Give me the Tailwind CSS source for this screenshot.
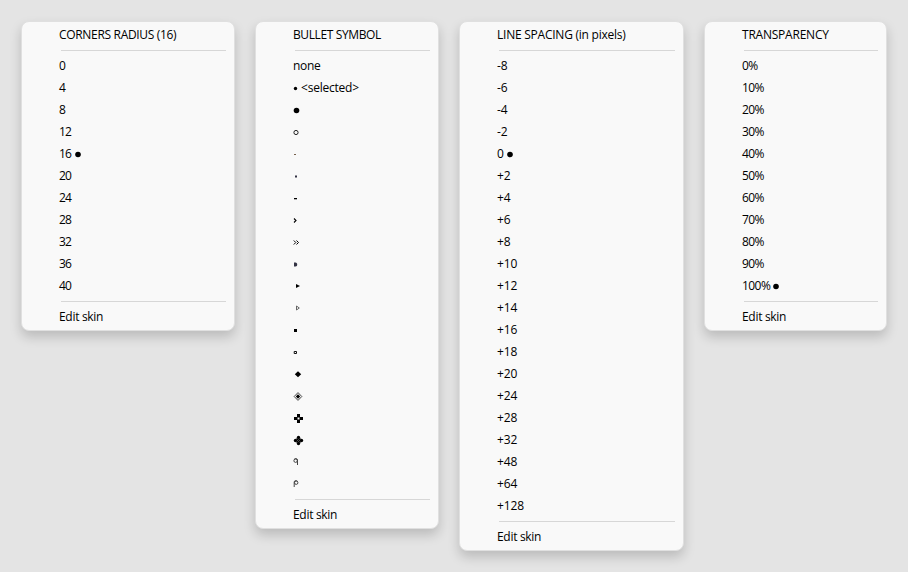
<!DOCTYPE html>
<html lang="en">
<head>
<meta charset="utf-8">
<title>Skin menus</title>
<script src="https://cdn.jsdelivr.net/npm/@tailwindcss/browser@4"></script>
</head>
<body class="bg-[#e4e4e4] w-[908px] h-[572px] overflow-hidden font-['Open_Sans','Noto_Sans',sans-serif] text-[12px] leading-[22px] text-black whitespace-nowrap">
<main class="flex items-start pl-[21px] pt-[21px] gap-5">

<section class="w-[214px] rounded-lg border border-[#e0e0e0] bg-[#f9f9f9] py-0.5 pl-[37px] pr-2 shadow-[0_6px_12px_rgba(0,0,0,0.18)]">
<h2 class="tracking-[-0.32px]">CORNERS RADIUS (16)</h2>
<hr class="my-1 ml-0.5 border-[#d7d7d7]">
<ul class="tracking-[-0.75px]">
<li>0</li><li>4</li><li>8</li><li>12</li>
<li class="flex items-center">16<svg class="ml-1" width="8" height="12"><circle cx="3" cy="6.500" r="2.800"/></svg></li>
<li>20</li><li>24</li><li>28</li><li>32</li><li>36</li><li>40</li>
</ul>
<hr class="my-1 ml-0.5 border-[#d7d7d7]">
<p class="tracking-[-0.3px]">Edit skin</p>
</section>

<section class="w-[184px] rounded-lg border border-[#e0e0e0] bg-[#f9f9f9] py-0.5 pl-[37px] pr-2 shadow-[0_6px_12px_rgba(0,0,0,0.18)]">
<h2 class="tracking-[-0.38px]">BULLET SYMBOL</h2>
<hr class="my-1 ml-0.5 border-[#d7d7d7]">
<ul class="*:h-[22px] *:flex *:items-center [&_svg]:block">
<li class="tracking-[-0.3px]">none</li>
<li class="tracking-[-0.22px]"><svg width="8" height="12"><circle cx="2.500" cy="6.500" r="1.700"/></svg>&lt;selected&gt;</li>
<li><svg width="12" height="12"><circle cx="3.500" cy="6.500" r="2.800"/></svg></li>
<li><svg width="12" height="12" fill="none" stroke="#222"><circle cx="3" cy="6.5" r="2.1"/></svg></li>
<li><svg width="12" height="12"><path d="M1 6h2v1H1z" fill="#76604c"/></svg></li>
<li><svg width="12" height="12"><path d="M2 5.5h2v2H2z" fill="#334"/></svg></li>
<li><svg width="12" height="12"><path d="M1 6h3v1.3H1z"/></svg></li>
<li><svg width="12" height="12" fill="none" stroke="#000" stroke-width="1.1"><path d="M1 4.5l2 2-2 2"/></svg></li>
<li><svg width="12" height="12" fill="none" stroke="#000"><path d="M.8 4.5l2 2-2 2M3.500 4.5l2 2-2 2"/></svg></li>
<li><svg width="12" height="12"><path d="M1 4.500h1.500c2.300 0 2.300 4 0 4H1z" fill="#334"/></svg></li>
<li><svg width="12" height="12"><path d="M3 4l4 2-4 2z"/></svg></li>
<li><svg width="12" height="12" fill="none" stroke="#666"><path d="M3.5 4l2.8 2-2.8 2z"/></svg></li>
<li><svg width="12" height="12"><path d="M1 5h3v3H1z"/></svg></li>
<li><svg width="12" height="12" fill="none" stroke="#111"><path d="M1.200 5.500h2.300v2H1.200z"/></svg></li>
<li><svg width="12" height="12"><path d="M5 3.3l3.2 3-3.2 3-3.200-3z"/></svg></li>
<li><svg width="12" height="12"><path d="M5 2.600l3.800 3.900L5 10.400 1.200 6.500z" fill="none" stroke="#444"/><path d="M5 4.300l2.200 2.200L5 8.700 2.800 6.500z"/></svg></li>
<li><svg width="12" height="12"><path d="M4 2h3v2H4zM4 9h3v2H4zM1 5h2v3H1zM8 5h2v3H8z"/><path d="M3 5h1V4h3v1h1v3H7v1H4V8H3z"/><path d="M4.500 5.500h2v2h-2z" fill="#f9f9f9"/></svg></li>
<li><svg width="12" height="12"><circle cx="5.500" cy="3.500" r="1.700"/><circle cx="5.500" cy="9.500" r="1.700"/><circle cx="2.500" cy="6.500" r="1.700"/><circle cx="8.500" cy="6.500" r="1.700"/><path d="M3.500 4.500l4 4m0-4l-4 4" stroke="#000" stroke-width="1.200"/></svg></li>
<li><svg width="12" height="12" fill="none" stroke="#444"><circle cx="2.600" cy="4.700" r="1.700"/><path d="M4.500 9V4C4.500 2.500 2.500 2 1 3.500"/></svg></li>
<li><svg width="12" height="12" fill="none" stroke="#444"><circle cx="3.200" cy="4.700" r="1.700"/><path d="M1.200 9V4C1.200 2.500 3.300 2 4.700 3.500"/></svg></li>
</ul>
<hr class="my-1 ml-0.5 border-[#d7d7d7]">
<p class="tracking-[-0.3px]">Edit skin</p>
</section>

<section class="w-[225px] rounded-lg border border-[#e0e0e0] bg-[#f9f9f9] py-0.5 pl-[37px] pr-2 shadow-[0_6px_12px_rgba(0,0,0,0.18)]">
<h2 class="tracking-[-0.24px]">LINE SPACING (in pixels)</h2>
<hr class="my-1 ml-0.5 border-[#d7d7d7]">
<ul class="tracking-[-0.15px]">
<li>-8</li><li>-6</li><li>-4</li><li>-2</li>
<li class="flex items-center">0<svg class="ml-[3px]" width="8" height="12"><circle cx="3" cy="6.500" r="2.800"/></svg></li>
<li>+2</li><li>+4</li><li>+6</li><li>+8</li><li>+10</li><li>+12</li><li>+14</li><li>+16</li><li>+18</li><li>+20</li><li>+24</li><li>+28</li><li>+32</li><li>+48</li><li>+64</li><li>+128</li>
</ul>
<hr class="my-1 ml-0.5 border-[#d7d7d7]">
<p class="tracking-[-0.3px]">Edit skin</p>
</section>

<section class="w-[183px] rounded-lg border border-[#e0e0e0] bg-[#f9f9f9] py-0.5 pl-[37px] pr-2 shadow-[0_6px_12px_rgba(0,0,0,0.18)]">
<h2 class="tracking-[-0.22px]">TRANSPARENCY</h2>
<hr class="my-1 ml-0.5 border-[#d7d7d7]">
<ul class="tracking-[-0.55px]">
<li>0%</li><li>10%</li><li>20%</li><li>30%</li><li>40%</li><li>50%</li><li>60%</li><li>70%</li><li>80%</li><li>90%</li>
<li class="flex items-center">100%<svg class="ml-[3px]" width="8" height="12"><circle cx="3" cy="6.500" r="2.800"/></svg></li>
</ul>
<hr class="my-1 ml-0.5 border-[#d7d7d7]">
<p class="tracking-[-0.3px]">Edit skin</p>
</section>

</main>
</body>
</html>
